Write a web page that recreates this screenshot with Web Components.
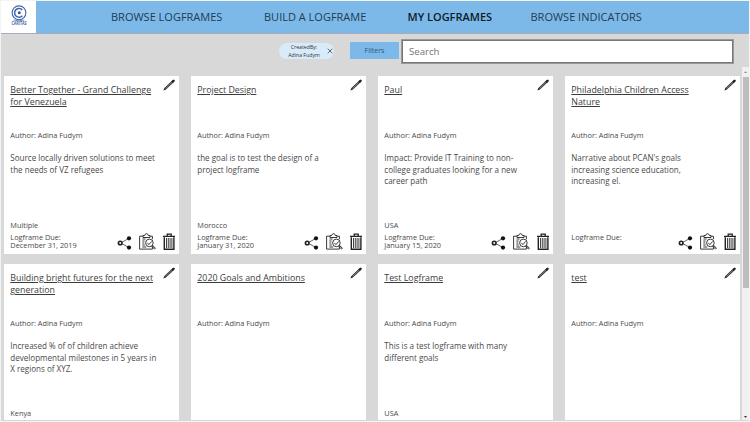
<!DOCTYPE html>
<html lang="en"><head><meta charset="utf-8"><title>My Logframes</title>
<style>html,body{margin:0;height:100%;overflow:hidden;background:#f4f4f4}</style></head>
<body><logframe-app></logframe-app>
<script>
class BaseElement extends HTMLElement{
  connectedCallback(){ if(!this.shadowRoot) this.attachShadow({mode:'open'}).innerHTML=this.render(); }
  attr(n){ return this.getAttribute(n)||''; }
}
customElements.define('brand-logo',class extends BaseElement{render(){return `
<style>:host{display:block;width:35px;height:32px;background:#fff;flex:none}svg{display:block}</style>
<svg width="35" height="32" viewBox="0 0 35 32" fill="none" stroke="#3f65a8">
<circle cx="18" cy="11.8" r="6.9" stroke-width="1.1"/><path d="M21.3 8.9a4.4 4.4 0 1 0 0 5.8" stroke-width="1.5"/><circle cx="18.3" cy="11.8" r="1.5" fill="#3159a0" stroke="none"/><path d="M12.5 19q5.5 1.6 11 0" stroke-width=".7"/>
<text x="18" y="24.3" text-anchor="middle" textLength="15" lengthAdjust="spacingAndGlyphs" font-family="Open Sans,sans-serif" font-weight="700" font-size="4.6" fill="#3f65a8" stroke="none">CARITAS</text></svg>`}});
customElements.define('nav-item',class extends BaseElement{render(){return `
<style>:host{display:block;flex:none;font:400 11px/32px "Open Sans",sans-serif;color:#213c50;white-space:nowrap}:host([active]){font-weight:600;color:#0c1c29}</style><slot></slot>`}});
customElements.define('top-nav',class extends BaseElement{render(){return `
<style>:host{display:flex;height:32px;background:#7db9e8;border-bottom:1px solid #a9adb9;flex:none}nav{display:grid;grid-template-columns:153px 143.5px 123px auto;padding-left:75px}</style>
<brand-logo></brand-logo><nav><slot></slot></nav>`}});
customElements.define('filter-chip',class extends BaseElement{render(){return `
<style>:host{display:flex;align-items:center;width:55px;height:16px;border-radius:8px;background:#d9ebf9;font:5.2px/7.6px "Open Sans",sans-serif;color:#333;box-sizing:border-box}div{width:50px;text-align:center;padding-top:1px}svg{flex:none;margin-left:-2px}</style>
<div><slot></slot></div><svg width="6" height="6" viewBox="0 0 6 6" stroke="#333" stroke-width=".7"><path d="M.7.7l4.6 4.6M5.3.7L.7 5.3"/></svg>`}});
customElements.define('search-bar',class extends BaseElement{render(){return `
<style>:host{display:flex;align-items:flex-start;box-sizing:border-box;height:33px;padding:6px 0 0 278px;flex:none;font-family:"Open Sans",sans-serif}
filter-chip{margin-top:3px}.btn{margin:2px 3px 0 16px;width:49px;height:17px;background:#7db9e8;font-size:7px;line-height:17px;text-align:center;color:#2f5876}
.input{box-sizing:border-box;width:330.5px;height:23px;border:1px solid #777;outline:.4px solid #999;background:#fff;padding-left:6px;font-size:9.6px;line-height:21px;color:#757575}</style>
<filter-chip>CreatedBy:<br>Adina Fudym</filter-chip><div class="btn">Filters</div><div class="input">Search</div>`}});
customElements.define('pencil-icon',class extends BaseElement{render(){return `
<style>:host{display:block;width:12px;height:12px}svg{display:block}</style>
<svg width="12" height="12" viewBox="0 0 12 12"><path d="M.4 11.4l.7-2 1.3 1.3z" fill="#222"/><path d="M1.6 10.2L10.5 1.9" stroke="#333" stroke-width="2.2"/><path d="M2.5 9.4L9 3.3" stroke="#999" stroke-width=".7"/><path d="M9.8 2.5l.9-.8" stroke="#222" stroke-width="2.1" stroke-linecap="round"/></svg>`}});
customElements.define('card-actions',class extends BaseElement{render(){return `
<style>:host{display:block;width:58px;height:18px}svg{display:block}</style>
<svg width="58" height="18" viewBox="0 0 58 18" fill="none" stroke="#222">
<path d="M12 5.3L3.7 10l8.3 4.6" stroke-width=".7"/><circle cx="3.2" cy="10" r="1.8" stroke-width="1.6" fill="#fff"/><g fill="#111" stroke="none"><circle cx="12" cy="5.3" r="2.1"/><circle cx="12" cy="14.6" r="2.1"/></g>
<g stroke-width=".9"><path d="M26 3.2h-3.4v12.9h12.8v-2M33.2 3.2h2.2v3"/><path d="M26 4.5V2.5h1.7q.2-1.8 1.8-1.8t1.8 1.8H33v2z"/><path d="M25.5 6h3M25.3 8h2.3M25.3 10h2M25.3 12h2.5M25.3 14h4"/><circle cx="32.4" cy="9.9" r="3.8" fill="#fff"/><path d="M30.3 9.8l1.6 1.8 2.8-3.2"/><path d="M35 12.8l3.2 3.1" stroke-width="2"/><path d="M35.6 13.3l2.4 2.4" stroke="#fff" stroke-width=".7"/></g>
<path d="M46 3.3h12M50.2 3V1.2h4V3" stroke-width="1.3"/><path d="M47.3 4.3v12h9.6v-12" stroke-width="1.4"/><path d="M49.5 5v10M51.3 5v10M53.1 5v10M54.9 5v10" stroke-width=".85"/></svg>`}});
customElements.define('logframe-card',class extends BaseElement{render(){return `
<style>:host{display:flex;flex-direction:column;position:relative;box-sizing:border-box;height:177.5px;background:#fff;padding:8.2px 6px 0 6.3px;font:7.35px/8px "Open Sans",sans-serif;color:#4a4a4a}
h2{margin:0;height:44px;font-weight:400;font-size:8.84px;line-height:12px;color:#3c3c3c;text-decoration:underline;text-decoration-thickness:.7px;text-underline-offset:1.2px;white-space:pre-line}
.author{height:23.8px;line-height:15px}.desc{height:68.7px;font-size:8.05px;line-height:11.7px;white-space:pre-line}.place{height:9px}
.foot{padding-top:3.4px;white-space:pre-line}
pencil-icon{position:absolute;right:4.2px;top:2.5px}card-actions{position:absolute;right:4.2px;bottom:3px}</style>
<h2>${this.attr('heading')}</h2><div class="author">Author: Adina Fudym</div><div class="desc"><slot></slot></div><div class="place">${this.attr('place')}</div>
${this.hasAttribute('due')?`<div class="foot">Logframe Due:\n${this.attr('due')}</div><card-actions></card-actions>`:''}<pencil-icon></pencil-icon>`}});
customElements.define('scroll-rail',class extends BaseElement{render(){return `
<style>:host{display:flex;flex-direction:column;align-items:center;width:7px;background:#f0f0f0;height:353px}
.thumb{width:6px;height:211px;background:#bdbdbd}svg{display:block;flex:none}.sp{flex:1}</style>
<svg width="7" height="10"><path d="M2 6L3.5 4.2 5 6z" fill="#888"/></svg><div class="thumb"></div><div class="sp"></div><svg width="7" height="7"><path d="M2 3l1.5 1.9L5 3z" fill="#333"/></svg>`}});
customElements.define('logframe-app',class extends BaseElement{render(){return `
<style>:host{display:flex;flex-direction:column;box-sizing:border-box;margin:1px;width:748px;height:419.5px;background:#d8d8d8;overflow:hidden}
main{display:flex;justify-content:space-between}.grid{display:grid;grid-template-columns:repeat(4,175px);gap:10.5px 12px;padding:9px 0 0 3px;height:344px;overflow:hidden}</style>
<top-nav><nav-item>BROWSE LOGFRAMES</nav-item><nav-item>BUILD A LOGFRAME</nav-item><nav-item active>MY LOGFRAMES</nav-item><nav-item>BROWSE INDICATORS</nav-item></top-nav>
<search-bar></search-bar><main><div class="grid">
<logframe-card heading="Better Together - Grand Challenge\nfor Venezuela" place="Multiple" due="December 31, 2019">Source locally driven solutions to meet\nthe needs of VZ refugees</logframe-card>
<logframe-card heading="Project Design" place="Morocco" due="January 31, 2020">the goal is to test the design of a\nproject logframe</logframe-card>
<logframe-card heading="Paul" place="USA" due="January 15, 2020">Impact: Provide IT Training to non-\ncollege graduates looking for a new\ncareer path</logframe-card>
<logframe-card heading="Philadelphia Children Access\nNature" due="">Narrative about PCAN's goals\nincreasing science education,\nincreasing el.</logframe-card>
<logframe-card heading="Building bright futures for the next\ngeneration" place="Kenya">Increased % of of children achieve\ndevelopmental milestones in 5 years in\nX regions of XYZ.</logframe-card>
<logframe-card heading="2020 Goals and Ambitions"></logframe-card>
<logframe-card heading="Test Logframe" place="USA">This is a test logframe with many\ndifferent goals</logframe-card>
<logframe-card heading="test"></logframe-card>
</div><scroll-rail></scroll-rail></main>`}});
</script></body></html>
